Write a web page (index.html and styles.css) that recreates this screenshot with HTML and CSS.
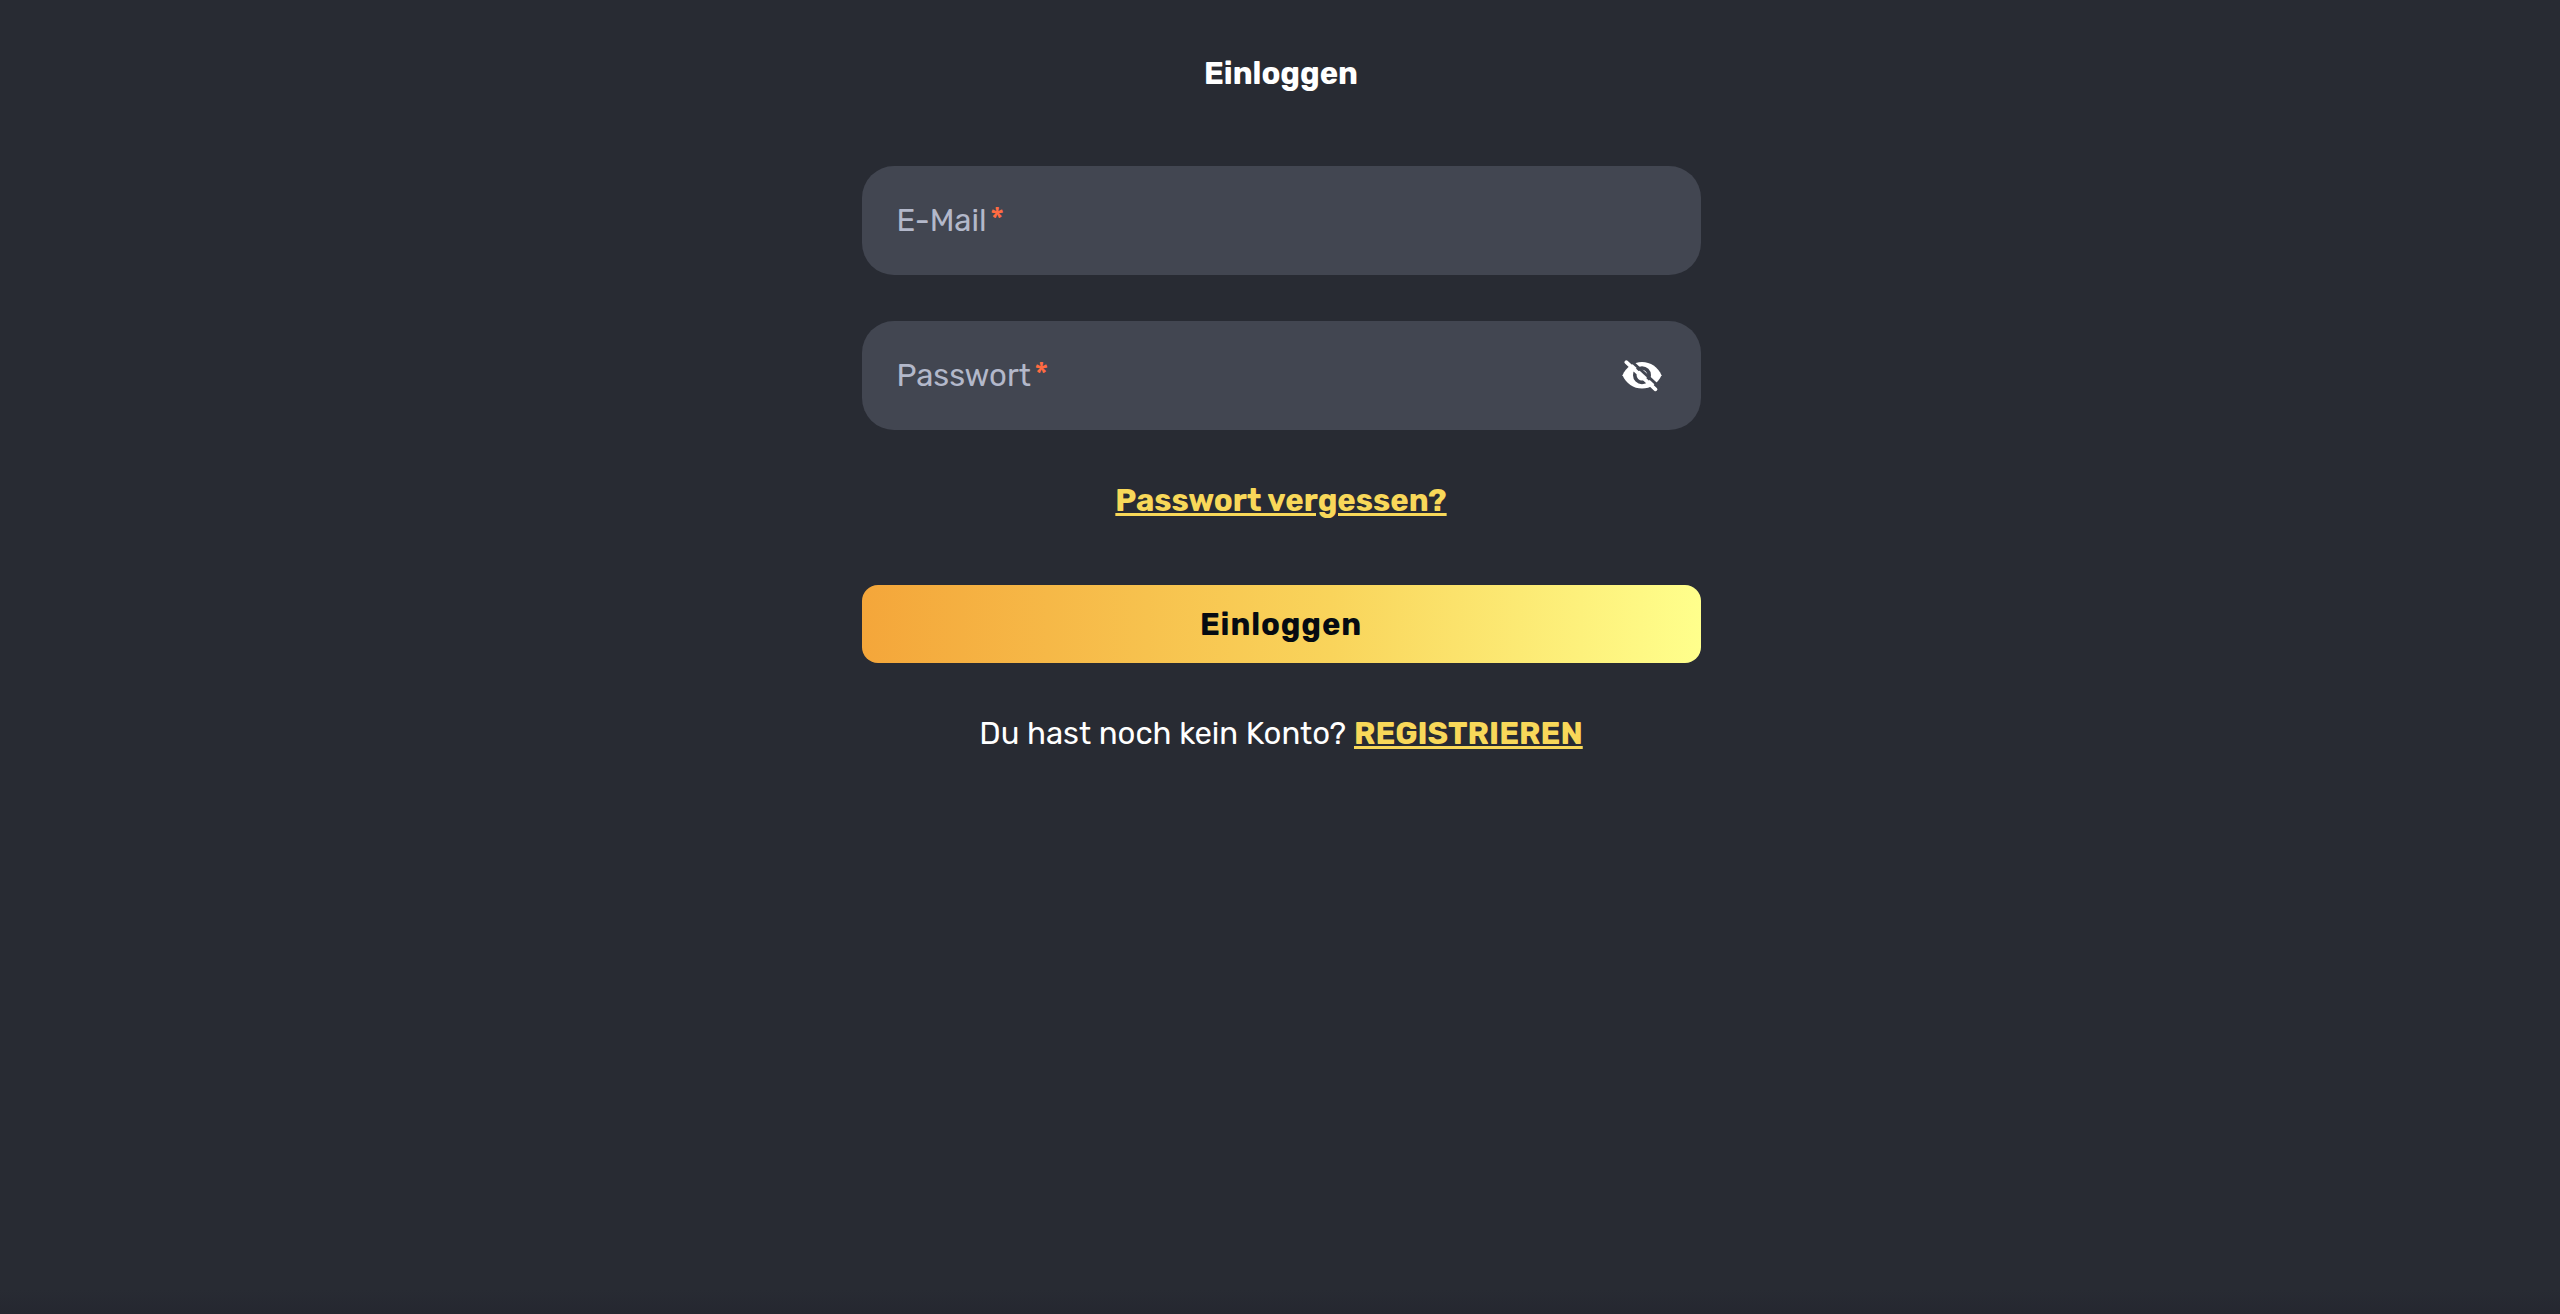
FILE: index.html
```html
<!DOCTYPE html>
<html lang="de">
<head>
    <meta charset="UTF-8">
    <meta name="viewport" content="width=device-width, initial-scale=1.0">
    <title>Einloggen</title>
    <link rel="stylesheet" href="styles.css">
</head>
<body>
    <main class="login">
        <h1 class="title">Einloggen</h1>
        <form class="login-form">
            <div class="field">
                <span class="field-label">E-Mail</span><span class="required">*</span>
            </div>
            <div class="field">
                <span class="field-label">Passwort</span><span class="required">*</span>
                <svg class="eye-icon" width="40" height="32" viewBox="0 0 40 32">
                    <path fill="#fff" d="M20 2C11.500 2 4 7 .5 15.200C4 23.500 11.500 28.500 20 28.500S36 23.500 39.500 15.200C36 7 28.500 2 20 2Z"/>
                    <circle cx="20" cy="15.200" r="7.200" fill="none" stroke="#424651" stroke-width="3.600"/>
                    <path d="M7-1L38 27.500" stroke="#424651" stroke-width="3"/>
                    <path d="M4.300 2.200L33.500 29.300" stroke="#fff" stroke-width="3.800" stroke-linecap="round"/>
                </svg>
            </div>
            <a class="link forgot">Passwort vergessen?</a>
            <button class="submit" type="button">Einloggen</button>
        </form>
        <p class="register"><span class="question">Du hast noch kein Konto?</span><a class="link">REGISTRIEREN</a></p>
    </main>
</body>
</html>
```
FILE: styles.css
```css
body {
    margin: 0;
    min-height: 1314px;
    background: linear-gradient(to bottom, #282b33 1290px, #252730 1314px);
    color: #fff;
    font-family: Rubik, Roboto, sans-serif;
    font-size: 31.1px;
    line-height: 40px;
}
.login {
    width: 839px;
    margin: 0 auto;
    padding: 54px 0 0 2px;
    display: flex;
    flex-direction: column;
    align-items: center;
}
.title {
    margin: 0;
    font-size: 31px;
    font-weight: 700;
}
.login-form {
    width: 100%;
    margin-top: 72px;
    display: flex;
    flex-direction: column;
    align-items: center;
}
.field {
    width: 100%;
    height: 109px;
    margin-bottom: 46px;
    padding: 0 39px 0 35px;
    box-sizing: border-box;
    border-radius: 32px;
    background-color: #424651;
    display: flex;
    align-items: center;
}
.field-label {
    color: #b3b8ca;
}
.required {
    margin-left: 3px;
    color: #ff6b42;
    font-size: 33px;
    font-weight: 400;
}
.eye-icon {
    margin-left: auto;
    overflow: visible;
}
.link {
    color: #f8d859;
    font-weight: 700;
    text-decoration: underline;
    text-decoration-thickness: 3px;
    text-underline-offset: 2px;
}
.forgot {
    margin-top: 5px;
}
.submit {
    width: 100%;
    height: 78px;
    margin-top: 64px;
    border: none;
    border-radius: 16px;
    background: linear-gradient(90deg, #f4a63a, #f9d45b 56%, #ffff8c);
    color: #060b12;
    font: 700 31px Rubik, Roboto, sans-serif;
    letter-spacing: 0.9px;
}
.register {
    margin: 51px 0 0;
    white-space: nowrap;
}
.question {
    margin-right: 8px;
}
```
